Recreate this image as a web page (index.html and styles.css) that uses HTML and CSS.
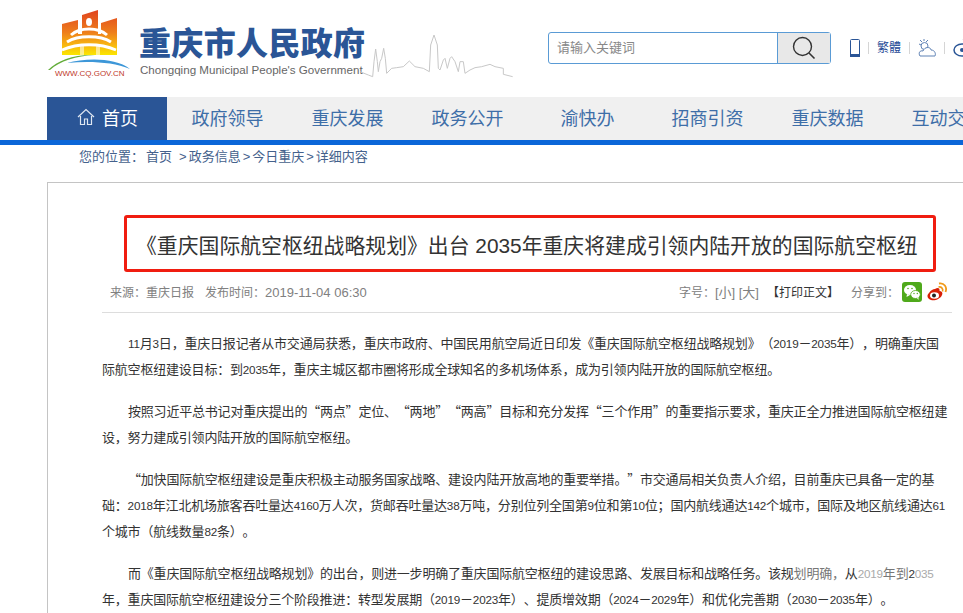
FILE: index.html
```html
<!DOCTYPE html>
<html lang="zh-CN">
<head>
<meta charset="utf-8">
<title>重庆市人民政府</title>
<link rel="stylesheet" href="styles.css">
</head>
<body>
<div class="page">
<header class="top">
  <div class="logo">
    <svg class="emblem" width="90" height="65" viewBox="45 5 90 65">
      <defs>
        <linearGradient id="g" x1="0" y1="10" x2="0" y2="55" gradientUnits="userSpaceOnUse"><stop offset="0" stop-color="#e0431f"/><stop offset="0.5" stop-color="#ee7f1c"/><stop offset="0.78" stop-color="#f8b70f"/><stop offset="1" stop-color="#fbe600"/></linearGradient>
      </defs>
      <path d="M62 24 78 20V34H82V15L98 10V34H101V23L117 18V55H62Z" fill="url(#g)"/>
      <ellipse cx="89" cy="22" rx="3" ry="4" fill="#fff"/>
      <path d="M71 35C80 27 98 27 107 35M67 42C78 35 100 35 111 42M62 50C78 43 100 43 116 50" fill="none" stroke="#fff" stroke-width="3"/>
      <path d="M80 45H84V55H80ZM96 45H100V55H96Z" fill="#fff" opacity=".55"/>
      <path d="M48 70C58 60 75 54 95 55 76 56 60 61 50 70Z" fill="#63ad3a"/>
      <path d="M67 63C85 58 115 57 130 69 113 62 90 61 67 63Z" fill="#3d97d8"/>
    </svg>
    <span class="url">WWW.CQ.GOV.CN</span>
  </div>
  <div class="brand">
    <div class="brand-cn">重庆市人民政府</div>
    <div class="brand-en">Chongqing Municipal People's Government</div>
  </div>
  <svg class="skyline" width="160" height="60" viewBox="0 0 480 180"><path d="M0 140 25 150 38 155 42 110 47 72 52 110 55 140 60 110 65 100 71 70 76 100 80 145 95 130 110 128 130 125 148 108 165 125 190 130 208 140 212 60 222 30 232 60 235 130 240 135 250 105 255 100 262 130 270 100 275 95 285 110 295 140 300 110 310 110 315 145 330 135 345 128 365 125 390 118 405 125 430 130 430 148 458 155" fill="none" stroke="#c8c8c8" stroke-width="3"/></svg>
  <form class="search">
    <span class="search-input">请输入关键词</span>
    <span class="search-btn">
      <svg width="24" height="24" viewBox="0 0 24 24"><circle cx="10.500" cy="10.500" r="9" fill="none" stroke="#333" stroke-width="1.400"/><path d="M17 17 22.500 22.500" stroke="#333" stroke-width="1.600"/></svg>
    </span>
  </form>
  <div class="tools">
    <svg width="10" height="18" viewBox="0 0 10 18"><rect x=".5" y=".5" width="9" height="17" rx="1" fill="#fff" stroke="#2a5596"/><rect x="0" y="15" width="10" height="3" fill="#2a5596"/></svg>
    <i class="sep"></i>
    <span class="trad">繁體</span>
    <i class="sep"></i>
    <svg width="18" height="18" viewBox="0 0 18 18"><path d="M6 0V2M1 5 3 6M2 1 4 3M10 1 8 3" fill="none" stroke="#5f82b5"/><circle cx="6.500" cy="7" r="3.500" fill="none" stroke="#5f82b5"/><path d="M2 17C0 14 2 11 5 12 7 7 13 8 13 11 17 11 18 15 17 17Z" fill="#fff" stroke="#5f82b5"/></svg>
    <i class="sep"></i>
    <svg width="20" height="18" viewBox="0 0 20 18"><ellipse cx="9" cy="11" rx="8" ry="6" fill="none" stroke="#2a5596" stroke-width="1.500"/><circle cx="9" cy="11" r="2" fill="#2a5596"/><path d="M10 1C13 0 17 2 17 6" fill="none" stroke="#2a5596" stroke-width="1.500"/></svg>
  </div>
</header>

<nav class="nav">
  <a class="nav-item active">
    <svg width="18" height="18" viewBox="0 0 18 18"><path d="M1 9 9 1.500 17 9M3.500 8V16.500H7.500V11H10.500V16.500H14.500V8" fill="none" stroke="#dfe7f2" stroke-width="1.200"/></svg>
    首页
  </a>
  <a class="nav-item">政府领导</a>
  <a class="nav-item">重庆发展</a>
  <a class="nav-item">政务公开</a>
  <a class="nav-item">渝快办</a>
  <a class="nav-item">招商引资</a>
  <a class="nav-item">重庆数据</a>
  <a class="nav-item">互动交流</a>
</nav>

<div class="crumb">您的位置：<span class="crumb-home">首页</span><span class="crumb-sep first">&gt;</span>政务信息<span class="crumb-sep">&gt;</span>今日重庆<span class="crumb-sep">&gt;</span>详细内容</div>

<main class="article">
  <div class="title-box">
    <h1 class="title">《重庆国际航空枢纽战略规划》出台 2035年重庆将建成引领内陆开放的国际航空枢纽</h1>
  </div>
  <div class="meta">
    <div class="meta-left">来源：重庆日报<span class="gap"></span>发布时间：<span class="date">2019-11-04 06:30</span></div>
    <div class="meta-right">
      <span>字号：<span class="size">[小] [大]</span></span>
      <span class="print">【打印正文】</span>
      <span class="share">分享到：</span>
      <svg class="wx" width="20" height="20" viewBox="0 0 20 20"><rect width="20" height="20" rx="3" fill="#4fa91b"/><ellipse cx="8" cy="8" rx="6" ry="5" fill="#fff"/><path d="M5 12 4.500 15 8 13Z" fill="#fff"/><circle cx="6" cy="6.500" r=".8" fill="#4fa91b"/><circle cx="10" cy="6.500" r=".8" fill="#4fa91b"/><ellipse cx="13.500" cy="12.500" rx="4.800" ry="4" fill="#fff" stroke="#4fa91b" stroke-width=".8"/><path d="M15 16 16.500 18 16.500 15Z" fill="#fff"/><circle cx="12" cy="11.500" r=".7" fill="#4fa91b"/><circle cx="15.300" cy="11.500" r=".7" fill="#4fa91b"/></svg>
      <svg class="wb" width="20" height="20" viewBox="0 0 20 20"><path d="M8 7C11 5 13 6 12.500 9 15 9 16 11 15 13 13.500 17 8 19 4 18 0 17-.5 13 2 11 4 8 6 7 8 7Z" fill="#d81e06"/><ellipse cx="7.500" cy="13.500" rx="4.500" ry="3.300" fill="#fff"/><circle cx="7" cy="13.500" r="2" fill="#222"/><path d="M11.500 5C14.500 4.500 16.500 7 15.500 9.500" fill="none" stroke="#f09a1a" stroke-width="1.600"/><path d="M12 1.500C17 .5 20.500 5 18.500 10" fill="none" stroke="#f09a1a" stroke-width="1.800"/></svg>
    </div>
  </div>
  <div class="body">
    <p><span class="n">11</span>月<span class="n">3</span>日，重庆日报记者从市交通局获悉，重庆市政府、中国民用航空局近日印发《重庆国际航空枢纽战略规划》（<span class="n">2019</span>－<span class="n">2035</span>年），明确重庆国际航空枢纽建设目标：到<span class="n">2035</span>年，重庆主城区都市圈将形成全球知名的多机场体系，成为引领内陆开放的国际航空枢纽。</p>
    <p>按照习近平总书记对重庆提出的“两点”定位、“两地”“两高”目标和充分发挥“三个作用”的重要指示要求，重庆正全力推进国际航空枢纽建设，努力建成引领内陆开放的国际航空枢纽。</p>
    <p>“加快国际航空枢纽建设是重庆积极主动服务国家战略、建设内陆开放高地的重要举措。”市交通局相关负责人介绍，目前重庆已具备一定的基础：<span class="n">2018</span>年江北机场旅客吞吐量达<span class="n">4160</span>万人次，货邮吞吐量达<span class="n">38</span>万吨，分别位列全国第<span class="n">9</span>位和第<span class="n">10</span>位；国内航线通达<span class="n">142</span>个城市，国际及地区航线通达<span class="n">61</span>个城市（航线数量<span class="n">82</span>条）。</p>
    <p>而《重庆国际航空枢纽战略规划》的出台，则进一步明确了重庆国际航空枢纽的建设思路、发展目标和战略任务。该规<span class="dim">划明确，</span>从<span class="n faint">2019</span><span class="dim">年到</span><span class="n">2</span><span class="n faint">035</span>年，重庆国际航空枢纽建设分三个阶段推进：转型发展期（<span class="n">2019</span>－<span class="n">2023</span>年）、提质增效期（<span class="n">2024</span>－<span class="n">2029</span>年）和优化完善期（<span class="n">2030</span>－<span class="n">2035</span>年）。</p>
  </div>
</main>
</div>
</body>
</html>
```

FILE: styles.css
```css
* { box-sizing: border-box; }
html, body { margin: 0; padding: 0; height: 613px; overflow: hidden; background: #fff; }
body { font-family: "Liberation Sans", "Noto Sans CJK SC", sans-serif; color: #333; text-spacing-trim: space-all; }
.page { width: 963px; height: 613px; overflow: hidden; }

.top { display: flex; align-items: flex-start; height: 97px; padding-left: 45px; white-space: nowrap; }
.logo { width: 90px; flex: none; display: flex; flex-direction: column; align-items: flex-start; padding-top: 5px; }
.emblem { display: block; }
.url { font-size: 8px; line-height: 10px; color: #c0392b; margin-left: 10px; margin-top: -1px; }
.brand { margin-left: 4px; padding-top: 26px; width: 226px; flex: none; }
.brand-cn { font-size: 32px; line-height: 36px; font-weight: 900; color: #2a5596; letter-spacing: 0.35px; }
.brand-en { font-size: 11.6px; line-height: 14px; color: #666; margin-top: 1px; margin-left: 1px; }
.skyline { flex: none; margin-top: 25px; margin-left: -5px; }
.search { flex: none; display: flex; width: 283px; height: 32px; margin-top: 32px; margin-left: 28px; border: 1px solid #5a9bd5; border-radius: 3px; }
.search-input { flex: 1; font-size: 13px; line-height: 30px; padding-left: 8px; color: #888; }
.search-btn { width: 53px; display: flex; align-items: center; justify-content: center; background: #e8e8e8; border-left: 1px solid #5a9bd5; }
.tools { flex: none; display: flex; align-items: center; gap: 8px; margin-top: 39px; margin-left: 19px; }
.sep { width: 1px; height: 12px; background: #d5d5d5; }
.trad { font-size: 12px; line-height: 14px; color: #1f4a96; }

.nav { display: flex; height: 48px; margin-left: 47px; background: #f0f0f0; position: relative; white-space: nowrap; }
.nav-item { flex: none; width: 120px; display: flex; align-items: center; justify-content: center; gap: 7px; font-size: 18px; color: #3e6ea8; height: 43px; padding: 0 0 4px 1px; }
.nav-item.active { background: #2a5596; color: #fff; }
.nav::after { content: ""; position: absolute; left: -47px; right: 0; top: 43px; height: 5px; background: #0b66d8; }

.crumb { margin-left: 79px; margin-top: 3px; font-size: 13px; line-height: 18px; color: #44618c; }
.crumb-home { margin-left: 2px; }
.crumb-sep { margin: 0 2px; }
.crumb-sep.first { margin-left: 7px; }

.article { margin-left: 47px; margin-top: 16px; border: 1px solid #c4c4c4; border-right: 0; width: 916px; height: 500px; padding-top: 32px; }
.title-box { margin-left: 76px; width: 812px; height: 57px; border: 3px solid #f01d10; border-radius: 3px; display: flex; align-items: center; padding: 5px 0 0 9px; }
.title { margin: 0; font-weight: 400; font-size: 20.85px; line-height: 28px; color: #333; white-space: nowrap; }
.meta { display: flex; justify-content: space-between; align-items: center; margin-left: 54px; width: 850px; margin-top: 7px; padding: 0 0 8px 8px; height: 34px; border-bottom: 1px solid #ddd; font-size: 12px; color: #808080; white-space: nowrap; }
.gap { display: inline-block; width: 11px; }
.date { font-size: 13px; }
.size { font-size: 13px; }
.meta-right { display: flex; align-items: center; }
.print { margin-left: 8px; color: #333; }
.share { margin-left: 12px; }
.wx { margin-left: 3px; }
.wb { margin-left: 5px; margin-right: 5px; }
.body { margin-left: 54px; width: 846px; margin-top: 17px; font-family: "Noto Sans CJK SC", sans-serif; font-size: 13px; line-height: 26px; color: #333; }
.body p { margin: 0 0 16px; text-indent: 2em; letter-spacing: -0.2px; }
.n { font-family: "Liberation Sans", sans-serif; font-size: 11.7px; line-height: 1; }
.dim { color: #777; }
.faint { color: #aaa; }
```
